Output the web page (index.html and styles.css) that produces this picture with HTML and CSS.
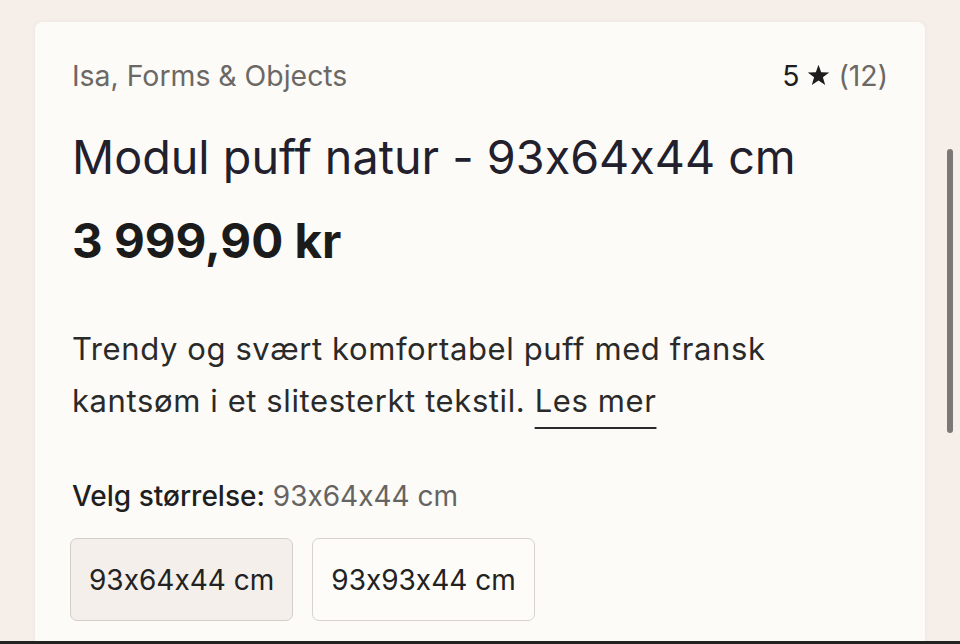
FILE: index.html
```html
<!DOCTYPE html>
<html lang="no">
<head>
<meta charset="utf-8">
<title>Modul puff natur</title>
<link rel="stylesheet" href="styles.css">
</head>
<body>
<div class="page">
  <main class="card">
    <div class="meta">
      <span class="brand">Isa, Forms &amp; Objects</span>
      <span class="rating"><span class="score">5</span><svg class="star" viewBox="0 0 24 23" width="23" height="22" aria-hidden="true"><path d="M12 0.8 L14.8 8.6 L23.2 8.8 L16.6 13.9 L19 22 L12 17.2 L5 22 L7.4 13.9 L0.8 8.8 L9.2 8.6 Z" fill="#1d1d1d"/></svg><span class="count">(12)</span></span>
    </div>
    <h1 class="title">Modul puff natur - 93x64x44 cm</h1>
    <div class="price">3 999,90 kr</div>
    <p class="desc">Trendy og svært komfortabel puff med fransk kantsøm i et slitesterkt tekstil. <a class="more" href="#">Les mer</a></p>
    <div class="size-label"><span class="label-strong">Velg størrelse:</span> <span class="label-value">93x64x44 cm</span></div>
    <div class="sizes">
      <button class="size selected">93x64x44 cm</button>
      <button class="size">93x93x44 cm</button>
    </div>
  </main>
  <div class="scrollbar"></div>
</div>
<div class="bottom-bar"></div>
</body>
</html>
```

FILE: styles.css
```css
* { box-sizing: border-box; }
html, body {
  margin: 0;
  padding: 0;
  height: 644px;
  overflow: hidden;
  background: #f5eee9;
  font-family: Inter, "Liberation Sans", sans-serif;
  font-feature-settings: "calt" 0;
}
body {
  display: flex;
  flex-direction: column;
}
.page {
  flex: 1;
  position: relative;
  padding: 22px 35px 0 35px;
  display: flex;
  min-height: 0;
}
.card {
  flex: 1;
  background: #fcfbf7;
  border-radius: 8px 8px 0 0;
  box-shadow: 0 0 5px rgba(120, 100, 80, 0.05);
  padding: 36px 37px 0 37px;
  overflow: hidden;
}
.meta {
  display: flex;
  justify-content: space-between;
  align-items: baseline;
  font-size: 28.4px;
  line-height: 36px;
}
.brand { color: #6b6865; }
.rating {
  display: flex;
  align-items: center;
  gap: 8px;
}
.score { color: #1d1d1d; }
.count { color: #6b6865; }
.star { display: block; margin-top: -2px; }
.title {
  margin: 34px 0 0 0;
  font-size: 46.7px;
  line-height: 58px;
  font-weight: 400;
  color: #22202d;
}
.price {
  margin-top: 27px;
  font-size: 47.5px;
  line-height: 56px;
  font-weight: 700;
  color: #1b1b1b;
}
.desc {
  margin: 54px 0 0 0;
  font-size: 31px;
  line-height: 52px;
  letter-spacing: 0.6px;
  color: #2a2a2a;
  max-width: 780px;
}
.more {
  color: #2a2a2a;
  text-decoration: underline;
  text-decoration-thickness: 2px;
  text-underline-offset: 15px;
}
.size-label {
  margin-top: 51px;
  font-size: 28px;
  line-height: 36px;
}
.label-strong { font-weight: 500; color: #1f1f1f; }
.label-value { color: #666462; }
.sizes {
  margin: 24px 0 0 -2px;
  display: flex;
  gap: 19px;
}
.size {
  font-family: inherit;
  font-feature-settings: "calt" 0;
  font-size: 28px;
  color: #222;
  height: 83px;
  padding: 0 18px;
  background: #fdfcf9;
  border: 1.5px solid #d6d3ce;
  border-radius: 7px;
  min-width: 222px;
}
.size.selected {
  background: #f4efea;
  border-color: #d2ceca;
}
.scrollbar {
  position: absolute;
  left: 947px;
  top: 149px;
  width: 6px;
  height: 284px;
  border-radius: 3px;
  background: #7a7977;
}
.bottom-bar {
  height: 3px;
  background: #232323;
  flex: none;
}
```
